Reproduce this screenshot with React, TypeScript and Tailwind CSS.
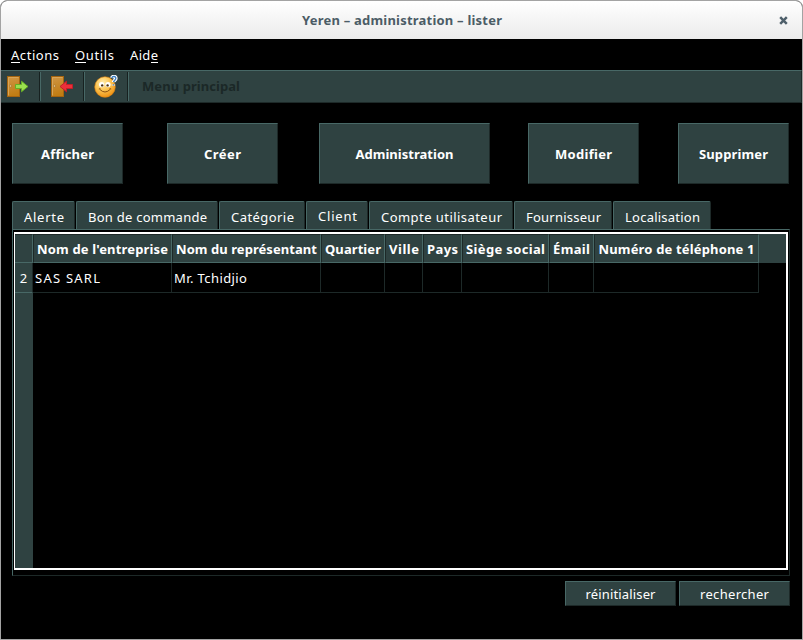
import { useLayoutEffect, useRef, useState, type ReactNode } from "react";

/** Single-line label whose tracking is adjusted so that it fills `width` pixels. */
function Label({ width, className = "", children }: { width: number; className?: string; children: ReactNode }) {
  const ref = useRef<HTMLSpanElement>(null);
  const [spacing, setSpacing] = useState(0);
  useLayoutEffect(() => {
    const el = ref.current;
    if (!el) return;
    el.style.letterSpacing = "0px";
    const natural = el.getBoundingClientRect().width;
    const gaps = Math.max(1, (el.textContent ?? "").length - 1);
    const next = (width - natural) / gaps;
    el.style.letterSpacing = `${next}px`;
    setSpacing(next);
  }, [width]);
  return (
    <span className={`flex shrink-0 justify-start whitespace-nowrap ${className}`} style={{ width }}>
      <span ref={ref} className="shrink-0" style={{ letterSpacing: spacing }}>
        {children}
      </span>
    </span>
  );
}

const raised = "border border-t-[#486866] border-l-[#486866] border-r-[#1d2928] border-b-[#1d2928] bg-[#2f4241]";

function Accel({ children }: { children: ReactNode }) {
  return <span className="inline-block h-[17px] border-b border-white">{children}</span>;
}

function Door({ out }: { out?: boolean }) {
  return (
    <svg width="23" height="22" viewBox="0 0 23 22">
      <defs>
        <linearGradient id="wood" x1="0" y1="0" x2="0.2" y2="1">
          <stop offset="0" stopColor="#cf9646" />
          <stop offset="1" stopColor="#c17d13" />
        </linearGradient>
      </defs>
      <rect x="0.5" y="0.5" width="12" height="20" fill="url(#wood)" stroke="#a4640f" />
      <path d="M1.5 19.5V1.5H11.5" fill="none" stroke="#d9a557" />
      <circle cx="3.5" cy="10" r="1.2" fill="#e9c583" stroke="#94601c" strokeWidth=".5" />
      {out ? (
        <path d="M21.5 8.5h-6V5.2L9 10.5l6.5 5.3v-3.3h6z" fill="#ec2f3a" stroke="#c01f29" strokeLinejoin="round" />
      ) : (
        <path d="M8.5 8.5h6V5.2l6.5 5.3-6.5 5.3v-3.3h-6z" fill="#9be04f" stroke="#66ad24" strokeLinejoin="round" />
      )}
    </svg>
  );
}

function Smiley() {
  return (
    <svg width="24" height="23" viewBox="0 0 24 23">
      <defs>
        <radialGradient id="face" cx="0.4" cy="0.3" r="0.75">
          <stop offset="0" stopColor="#ffeeb0" />
          <stop offset="0.5" stopColor="#fbc350" />
          <stop offset="1" stopColor="#ee8c0c" />
        </radialGradient>
      </defs>
      <circle cx="11" cy="12" r="10.3" fill="url(#face)" stroke="#e0850f" strokeWidth=".6" />
      <ellipse cx="7.6" cy="9.6" rx="2.6" ry="2.7" fill="#fff" />
      <ellipse cx="14" cy="9.6" rx="2.6" ry="2.7" fill="#fff" />
      <circle cx="8.2" cy="10.4" r="1.2" fill="#4a3213" />
      <circle cx="13.6" cy="10.4" r="1.2" fill="#4a3213" />
      <path d="M4.8 14q1.2.2 1.4-.8M17.2 14q-1.2.2-1.4-.8M5.6 14.2q5.4 5.6 10.8 0" fill="none" stroke="#8a4f10" strokeWidth="1" />
      <path d="M17.8 3C18.4 1 22 1 21.8 3.5c-.1 1.6-2 1.8-2.2 3.6M19.4 9.4v1.2" fill="none" stroke="#fff" strokeWidth="3.6" />
      <path d="M17.8 3C18.4 1 22 1 21.8 3.5c-.1 1.6-2 1.8-2.2 3.6M19.4 9.2v1.4" fill="none" stroke="#3d7fc0" strokeWidth="1.4" />
    </svg>
  );
}

function ToolSeparator() {
  return <div className="h-[29px] w-0.5 border-l border-r border-l-[#172120] border-r-[#486866]" />;
}

const actions = [
  { name: "Afficher", text: 53, box: "w-[111px]" },
  { name: "Créer", text: 37, box: "w-[111px] ml-11" },
  { name: "Administration", text: 98, box: "w-[171px] ml-[41px]" },
  { name: "Modifier", text: 57, box: "w-[111px] ml-[38px]" },
  { name: "Supprimer", text: 69, box: "w-[111px] ml-[39px]" },
];

const tabs = [
  { name: "Alerte", text: 40, box: "w-[63px] mr-px" },
  { name: "Bon de commande", text: 119, box: "w-[142px] mr-px" },
  { name: "Catégorie", text: 63, box: "w-[86px] mr-px" },
  { name: "Client", text: 39, box: "w-[62px] mr-px", active: true },
  { name: "Compte utilisateur", text: 121, box: "w-[144px] mr-px" },
  { name: "Fournisseur", text: 75, box: "w-[98px] mr-px" },
  { name: "Localisation", text: 75, box: "w-[98px]" },
];

const columns = [
  { name: "Nom de l'entreprise", text: 131, box: "w-[139px]", value: "SAS SARL", valueText: 65 },
  { name: "Nom du représentant", text: 141, box: "w-[149px]", value: "Mr. Tchidjio", valueText: 73 },
  { name: "Quartier", text: 56, box: "w-16" },
  { name: "Ville", text: 30, box: "w-[38px]" },
  { name: "Pays", text: 31, box: "w-[39px]" },
  { name: "Siège social", text: 79, box: "w-[87px]" },
  { name: "Émail", text: 37, box: "w-[45px]" },
  { name: "Numéro de téléphone 1", text: 156, box: "w-[165px]" },
];

export default function App() {
  return (
    <div className="h-[640px] w-[803px] bg-white">
      <div className="flex h-full w-full flex-col overflow-hidden rounded-t-[7px] border border-[#a3a3a3] bg-black font-['Noto_Sans','Open_Sans',sans-serif] text-[13px] leading-[18px] text-white">
        <header className="flex h-[38px] shrink-0 items-center bg-linear-to-b from-white to-[#ebebeb] pl-[301px] text-[#4b5c66]">
          <Label width={200} className="font-bold">Yeren – administration – lister</Label>
          <svg className="ml-[277px]" width="9" height="9" viewBox="0 0 9 9">
            <path d="M1.2 1.2l6.6 6.6M7.8 1.2L1.2 7.8" stroke="#4f606b" strokeWidth="2.5" />
          </svg>
        </header>

        <nav className="flex h-[31px] shrink-0 pt-[7px] pl-2.5">
          <Label width={48}><Accel>A</Accel>ctions</Label>
          <Label width={39} className="ml-4"><Accel>O</Accel>utils</Label>
          <Label width={28} className="ml-4">Aid<Accel>e</Accel></Label>
        </nav>

        <div className="flex h-[33px] shrink-0 items-center border-t border-r border-b border-t-[#486866] border-r-[#1d2928] border-b-[#1d2928] bg-[#2f4241]">
          <div className="flex w-[38px] pl-1.5"><Door /></div>
          <ToolSeparator />
          <div className="flex w-[42px] pl-2.5"><Door out /></div>
          <ToolSeparator />
          <div className="flex w-[42px] pl-[9px]"><Smiley /></div>
          <ToolSeparator />
          <Label width={98} className="mb-0.5 ml-[13px] font-bold text-[#1b2827]">Menu principal</Label>
        </div>

        <div className="mt-5 flex h-[61px] shrink-0 pl-[11px]">
          {actions.map((a) => (
            <button key={a.name} className={`flex shrink-0 items-center justify-center font-bold ${raised} ${a.box}`}>
              <Label width={a.text}>{a.name}</Label>
            </button>
          ))}
        </div>

        <div className="mt-[17px] flex h-7 shrink-0 pl-[11px]">
          {tabs.map((t) => (
            <div
              key={t.name}
              className={`flex shrink-0 justify-center rounded-t-[2px] border-t border-r border-l border-t-[#486866] border-r-[#1d2928] border-l-[#486866] bg-[#2f4241] pl-px ${t.active ? "pt-[5px]" : "pt-1.5"} ${t.box}`}
            >
              <Label width={t.text}>{t.name}</Label>
            </div>
          ))}
        </div>

        <div className="ml-[11px] h-[347px] w-[778px] shrink-0 border border-t-[#486866] border-r-[#1d2928] border-b-[#1d2928] border-l-[#486866] pt-0.5 pl-px">
          <div className="flex h-[338px] w-[774px] flex-col border-t-2 border-r-2 border-b-2 border-l border-white">
            <div className="flex h-[29px] shrink-0 bg-[#2f4241]">
              <div className="w-[18px] border-t border-r border-b border-t-[#1d2928] border-r-[#486866] border-b-[#486866]" />
              {columns.map((c) => (
                <div
                  key={c.name}
                  className={`flex shrink-0 justify-center border border-t-[#1d2928] border-r-[#486866] border-b-[#486866] border-l-[#1d2928] pt-[5px] font-bold ${c.box}`}
                >
                  <Label width={c.text}>{c.name}</Label>
                </div>
              ))}
            </div>
            <div className="flex h-[30px] shrink-0">
              <div className="w-[18px] border-r border-b border-r-[#1d2928] border-b-[#486866] bg-[#2f4241] pt-1.5 text-center">2</div>
              {columns.map((c) => (
                <div key={c.name} className={`shrink-0 border-r border-b border-[#1d2928] pt-1.5 pl-0.5 ${c.box}`}>
                  {c.value && <Label width={c.valueText ?? 0}>{c.value}</Label>}
                </div>
              ))}
            </div>
            <div className="w-[18px] grow bg-[#2f4241]" />
          </div>
        </div>

        <div className="mt-[5px] flex h-[25px] shrink-0 gap-[3px] pl-[564px]">
          <button className={`flex w-[111px] items-center justify-center ${raised}`}>
            <Label width={70}>réinitialiser</Label>
          </button>
          <button className={`flex w-[111px] items-center justify-center ${raised}`}>
            <Label width={69}>rechercher</Label>
          </button>
        </div>
      </div>
    </div>
  );
}
